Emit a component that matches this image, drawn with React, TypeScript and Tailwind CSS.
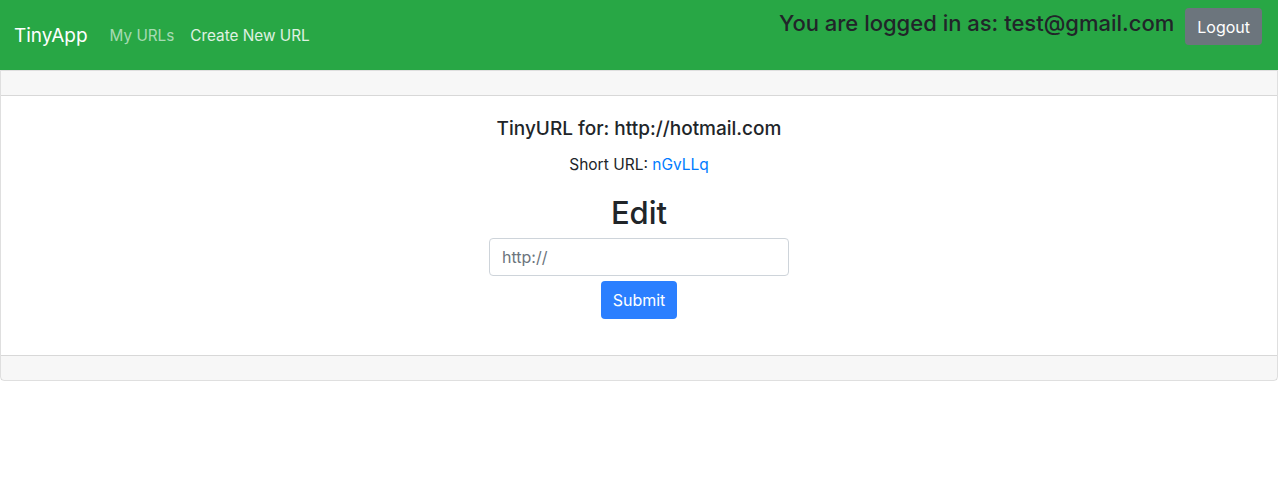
export default function App() {
  return (
    <div className="min-h-screen bg-white text-[#212529] font-['Inter','Noto_Sans',sans-serif]">
      {/* navbar */}
      <nav className="h-[70px] bg-[#28a745] flex items-start pl-[14px] pr-4">
        <div className="flex items-center h-full pt-[2px]">
          <span className="text-[19px] text-white">TinyApp</span>
          <span className="ml-[22px] text-[15.3px] text-white/60">My URLs</span>
          <span className="ml-4 text-[15.3px] text-white/85">Create New URL</span>
        </div>
        <div className="ml-auto flex items-start pt-2">
          <h3 className="text-[22px] font-medium leading-[30px] text-[#212529] mt-0">
            You are logged in as: test@gmail.com
          </h3>
          <button className="ml-[11px] h-[37px] px-3 rounded bg-[#6c757d] text-white text-[16px]">
            Logout
          </button>
        </div>
      </nav>

      {/* card */}
      <div className="border border-black/[0.125] rounded-b">
        <div className="h-[25px] bg-black/[0.03] border-b border-black/[0.125]" />
        <div className="flex flex-col items-center pt-[21px] pb-[36px]">
          <h5 className="text-[19px] font-medium leading-6">TinyURL for: http://hotmail.com</h5>
          <p className="mt-[12px] text-[15.5px] leading-6">
            Short URL: <a className="text-[#007bff]">nGvLLq</a>
          </p>
          <h2 className="mt-[16px] text-[31px] font-medium leading-[40px]">Edit</h2>
          <input
            className="mt-[5px] w-[300px] h-[38px] px-3 border border-[#ced4da] rounded text-[16px] placeholder:text-[#6c757d]"
            placeholder="http://"
          />
          <button className="mt-[5px] h-[38px] px-3 rounded bg-[#2b7fff] text-white text-[16px]">
            Submit
          </button>
        </div>
        <div className="h-[25px] bg-black/[0.03] border-t border-black/[0.125]" />
      </div>
    </div>
  );
}
